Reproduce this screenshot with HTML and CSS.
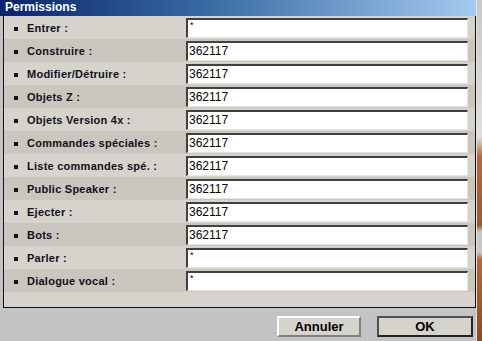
FILE: index.html
```html
<!DOCTYPE html>
<html>
<head>
<meta charset="utf-8">
<link rel="stylesheet" href="styles.css">
</head>
<body>
<div class="screen">
  <div class="window">
    <div class="titlebar">Permissions</div>
    <div class="panel">
      <div class="row"><span class="label">Entrer :</span><div class="field star">*</div></div>
      <div class="row"><span class="label">Construire :</span><div class="field">362117</div></div>
      <div class="row"><span class="label">Modifier/Détruire :</span><div class="field">362117</div></div>
      <div class="row"><span class="label">Objets Z :</span><div class="field">362117</div></div>
      <div class="row"><span class="label">Objets Version 4x :</span><div class="field">362117</div></div>
      <div class="row"><span class="label">Commandes spéciales :</span><div class="field">362117</div></div>
      <div class="row"><span class="label">Liste commandes spé. :</span><div class="field">362117</div></div>
      <div class="row"><span class="label">Public Speaker :</span><div class="field">362117</div></div>
      <div class="row"><span class="label">Ejecter :</span><div class="field">362117</div></div>
      <div class="row"><span class="label">Bots :</span><div class="field">362117</div></div>
      <div class="row"><span class="label">Parler :</span><div class="field star">*</div></div>
      <div class="row"><span class="label">Dialogue vocal :</span><div class="field star">*</div></div>
    </div>
    <div class="footer">
      <button class="btn">Annuler</button>
      <button class="btn default">OK</button>
    </div>
  </div>
  <div class="strip"></div>
</div>
</body>
</html>
```
FILE: styles.css
```css
html, body {
  margin: 0;
  padding: 0;
}
body {
  width: 482px;
  height: 341px;
  overflow: hidden;
  background: #c3c3c3;
  font-family: "Liberation Sans", Arial, sans-serif;
}
.screen {
  display: flex;
  height: 341px;
}
.window {
  width: 476px;
  display: flex;
  flex-direction: column;
  background: #c3c3c3;
}
.titlebar {
  height: 16px;
  line-height: 15px;
  padding-left: 5px;
  color: #fff;
  font-weight: bold;
  font-size: 12px;
  background: linear-gradient(to right, #0a246a 0%, #3a6ea5 45%, #a6caf0 100%);
}
.panel {
  margin-left: 3px;
  border: 1px solid #111;
  border-top: none;
  background: #d6d3cc;
  height: 292px;
  box-sizing: border-box;
  padding-bottom: 16px;
}
.row {
  height: 23px;
  display: flex;
  align-items: center;
}
.row:nth-child(even) {
  background: #cac6be;
}
.label {
  width: 182px;
  box-sizing: border-box;
  padding-left: 23px;
  position: relative;
  font-size: 11px;
  font-weight: bold;
  color: #101020;
  letter-spacing: 0.25px;
}
.label::before {
  content: "";
  position: absolute;
  left: 10px;
  top: 5px;
  width: 4px;
  height: 4px;
  background: #111;
}
.field {
  width: 282px;
  height: 20px;
  box-sizing: border-box;
  background: #fff;
  border-top: 2px solid #404040;
  border-left: 2px solid #404040;
  border-bottom: 1px solid #e8e6e0;
  border-right: 1px solid #e8e6e0;
  font-size: 12px;
  line-height: 16px;
  padding-left: 1px;
  color: #000;
}
.field.star {
  font-size: 9px;
  line-height: 10px;
  padding-left: 2px;
}
.footer {
  flex: 1;
  display: flex;
  justify-content: flex-end;
  align-items: flex-start;
  padding: 8px 3px 0 0;
  gap: 16px;
}
.btn {
  font-family: "Liberation Sans", Arial, sans-serif;
  font-weight: bold;
  font-size: 13px;
  height: 21px;
  padding: 0;
  margin: 0;
  background: #d6d3cc;
  color: #000;
  border-top: 2px solid #fff;
  border-left: 2px solid #fff;
  border-right: 2px solid #808080;
  border-bottom: 2px solid #808080;
  width: 84px;
  line-height: 15px;
}
.btn.default {
  width: 96px;
  border: 2px solid #222;
  border-top-color: #505050;
  border-left-color: #505050;
}
.strip {
  flex: 1;
  background: linear-gradient(to bottom, #c8c8c8 0%, #e0e0e0 40%, #b46a3a 46%, #9a5a30 66%, #c8c8c8 68%, #c8c8c8 74%, #b46a3a 76%, #8a4a20 100%);
  border-left: 1px solid #e0e0e0;
}
```
